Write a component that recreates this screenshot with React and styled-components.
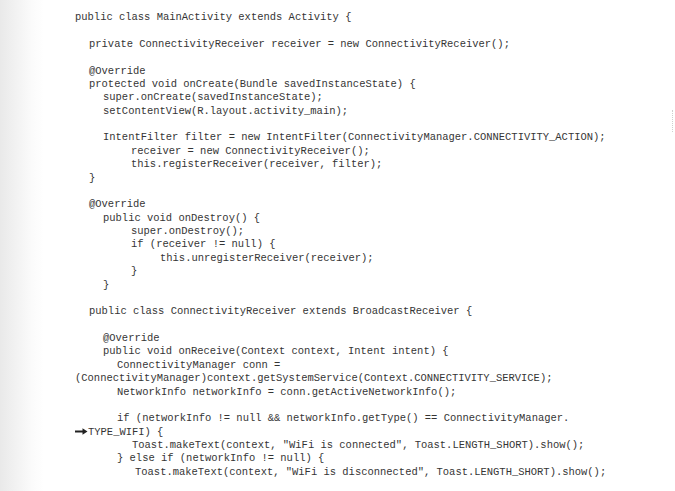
import React from 'react';
import styled, { createGlobalStyle } from 'styled-components';

const GlobalStyle = createGlobalStyle`
  html, body {
    margin: 0;
    padding: 0;
    background: #ffffff;
  }
`;

const Page = styled.div`
  position: relative;
  width: 675px;
  height: 491px;
  overflow: hidden;
  background: linear-gradient(to right, #e9e9e9 0px, #f3f3f3 18px, #fbfbfb 32px, #ffffff 44px);
`;

const Listing = styled.div`
  padding-top: 11px;
  font-family: "Liberation Mono", "Courier New", monospace;
  font-size: 10.47px;
  line-height: 13.38px;
  color: #353535;
`;

const Line = styled.div`
  height: 13.38px;
  white-space: pre;
  padding-left: ${({ indent }) => indent}px;
`;

const Arrow = styled.svg`
  width: 13px;
  height: 7px;
  vertical-align: 0px;
`;

const ScanMark = styled.div`
  position: absolute;
  left: 672px;
  top: 110px;
  width: 1px;
  height: 22px;
  border-left: 1px dotted #cfcfcf;
`;

const code = [
  [75, 'public class MainActivity extends Activity {'],
  [0, ''],
  [89, 'private ConnectivityReceiver receiver = new ConnectivityReceiver();'],
  [0, ''],
  [89, '@Override'],
  [89, 'protected void onCreate(Bundle savedInstanceState) {'],
  [103, 'super.onCreate(savedInstanceState);'],
  [103, 'setContentView(R.layout.activity_main);'],
  [0, ''],
  [103, 'IntentFilter filter = new IntentFilter(ConnectivityManager.CONNECTIVITY_ACTION);'],
  [131, 'receiver = new ConnectivityReceiver();'],
  [131, 'this.registerReceiver(receiver, filter);'],
  [89, '}'],
  [0, ''],
  [89, '@Override'],
  [103, 'public void onDestroy() {'],
  [131, 'super.onDestroy();'],
  [131, 'if (receiver != null) {'],
  [160, 'this.unregisterReceiver(receiver);'],
  [131, '}'],
  [103, '}'],
  [0, ''],
  [89, 'public class ConnectivityReceiver extends BroadcastReceiver {'],
  [0, ''],
  [103, '@Override'],
  [103, 'public void onReceive(Context context, Intent intent) {'],
  [117, 'ConnectivityManager conn ='],
  [75, '(ConnectivityManager)context.getSystemService(Context.CONNECTIVITY_SERVICE);'],
  [117, 'NetworkInfo networkInfo = conn.getActiveNetworkInfo();'],
  [0, ''],
  [117, 'if (networkInfo != null && networkInfo.getType() == ConnectivityManager.'],
  [75, 'TYPE_WIFI) {', true],
  [132, 'Toast.makeText(context, "WiFi is connected", Toast.LENGTH_SHORT).show();'],
  [117, '} else if (networkInfo != null) {'],
  [135, 'Toast.makeText(context, "WiFi is disconnected", Toast.LENGTH_SHORT).show();'],
];

function ContinueArrow() {
  return (
    <Arrow viewBox="0 0 13 7">
      <path d="M0 2.4 H7.5 V0.2 L12.5 3.5 L7.5 6.8 V4.6 H0 Z" fill="#222" />
    </Arrow>
  );
}

export default function App() {
  return (
    <Page>
      <GlobalStyle />
      <Listing>
        {code.map(([indent, text, wrapped], i) => (
          <Line key={i} indent={indent}>
            {wrapped && <ContinueArrow />}
            {text}
          </Line>
        ))}
      </Listing>
      <ScanMark />
    </Page>
  );
}
